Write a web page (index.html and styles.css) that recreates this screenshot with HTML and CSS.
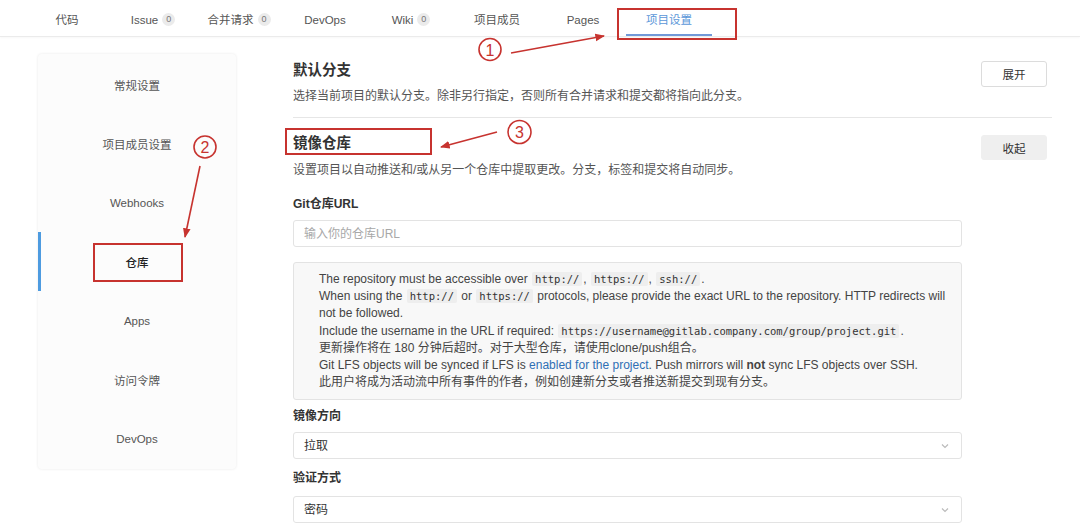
FILE: index.html
```html
<!DOCTYPE html>
<html lang="zh-CN">
<head>
  <meta charset="UTF-8">
  <meta name="viewport" content="width=device-width, initial-scale=1.0">
  <title>项目设置 - 仓库</title>
  <link rel="stylesheet" href="styles.css">
</head>
<body>
  <header class="tabs">
    <a class="tab" href="#">代码</a>
    <a class="tab" href="#">Issue <span class="badge">0</span></a>
    <a class="tab" href="#">合并请求 <span class="badge">0</span></a>
    <a class="tab" href="#">DevOps</a>
    <a class="tab" href="#">Wiki <span class="badge">0</span></a>
    <a class="tab" href="#">项目成员</a>
    <a class="tab" href="#">Pages</a>
    <a class="tab active" href="#">项目设置</a>
  </header>

  <div class="container">
    <aside class="side-menu">
      <a class="side-item" href="#">常规设置</a>
      <a class="side-item" href="#">项目成员设置</a>
      <a class="side-item" href="#">Webhooks</a>
      <a class="side-item active" href="#">仓库</a>
      <a class="side-item" href="#">Apps</a>
      <a class="side-item" href="#">访问令牌</a>
      <a class="side-item" href="#">DevOps</a>
    </aside>

    <main class="settings">
      <section class="section first">
        <div class="section-head">
          <div>
            <div class="section-title">默认分支</div>
            <div class="section-desc">选择当前项目的默认分支。除非另行指定，否则所有合并请求和提交都将指向此分支。</div>
          </div>
          <button class="btn">展开</button>
        </div>
      </section>

      <section class="section">
        <div class="section-head">
          <div>
            <div class="section-title">镜像仓库</div>
            <div class="section-desc">设置项目以自动推送和/或从另一个仓库中提取更改。分支，标签和提交将自动同步。</div>
          </div>
          <button class="btn btn-gray">收起</button>
        </div>

        <div class="form">
          <label class="form-label">Git仓库URL</label>
          <input class="form-input" type="text" placeholder="输入你的仓库URL">

          <div class="help-box">
            <div>The repository must be accessible over <code>http://</code>, <code>https://</code>, <code>ssh://</code>.</div>
            <div>When using the <code>http://</code> or <code>https://</code> protocols, please provide the exact URL to the repository. HTTP redirects will not be followed.</div>
            <div>Include the username in the URL if required: <code>https://username@gitlab.company.com/group/project.git</code>.</div>
            <div>更新操作将在 180 分钟后超时。对于大型仓库，请使用clone/push组合。</div>
            <div>Git LFS objects will be synced if LFS is <a href="#">enabled for the project</a>. Push mirrors will <strong>not</strong> sync LFS objects over SSH.</div>
            <div>此用户将成为活动流中所有事件的作者，例如创建新分支或者推送新提交到现有分支。</div>
          </div>

          <label class="form-label label-dir">镜像方向</label>
          <select class="form-select">
            <option>拉取</option>
            <option>推送</option>
          </select>

          <label class="form-label label-auth">验证方式</label>
          <select class="form-select select-auth">
            <option>密码</option>
            <option>SSH 公钥</option>
          </select>
        </div>
      </section>
    </main>
  </div>

  <!-- annotations drawn on top of the screenshot -->
  <svg class="marks" width="1080" height="525" viewBox="0 0 1080 525" xmlns="http://www.w3.org/2000/svg">
    <defs>
      <marker id="head" viewBox="0 0 10 10" refX="9" refY="5" markerWidth="6" markerHeight="6" orient="auto">
        <path d="M0,1 L10,5 L0,9 Z" fill="#c7332f"/>
      </marker>
    </defs>
    <g fill="none" stroke="#c7332f" stroke-width="2">
      <rect x="618" y="9" width="118" height="30"/>
      <rect x="94" y="244" width="88" height="37"/>
      <rect x="286" y="129" width="145" height="25"/>
    </g>
    <g fill="none" stroke="#c7332f" stroke-width="1.6">
      <circle cx="490" cy="49.5" r="11"/>
      <circle cx="205" cy="147" r="11"/>
      <circle cx="519.5" cy="132" r="11.5"/>
      <line x1="511" y1="53" x2="604" y2="36" marker-end="url(#head)"/>
      <line x1="200" y1="166" x2="185" y2="237" marker-end="url(#head)"/>
      <line x1="497" y1="132" x2="441" y2="147" marker-end="url(#head)"/>
    </g>
    <g class="mark-num" fill="#c7332f" text-anchor="middle">
      <text x="490" y="55.5">1</text>
      <text x="205" y="153">2</text>
      <text x="519.5" y="138">3</text>
    </g>
  </svg>
</body>
</html>
```

FILE: styles.css
```css
:root {
  --blue: #5b97d9;
  --text: #333333;
  --muted: #555555;
  --border: #e3e3e3;
}

body {
  margin: 0;
  position: relative;
  background: #ffffff;
  color: var(--text);
  font-family: "Liberation Sans", "Noto Sans CJK SC", sans-serif;
  font-size: 12px;
}

/* top tabs */
.tabs {
  display: flex;
  padding-left: 24px;
  height: 36px;
  border-bottom: 1px solid #ebebeb;
  box-shadow: 0 1px 2px rgba(0, 0, 0, 0.03);
}

.tab {
  box-sizing: border-box;
  width: 86px;
  height: 36px;
  padding-top: 6px;
  line-height: 28px;
  border-bottom: 2px solid transparent;
  display: flex;
  justify-content: center;
  align-items: flex-start;
  gap: 4px;
  color: var(--muted);
  font-size: 11.5px;
  text-decoration: none;
}

.tab.active {
  color: var(--blue);
  border-bottom-color: #7199d8;
}

.badge {
  display: inline-block;
  width: 13px;
  height: 13px;
  margin-top: 7px;
  border-radius: 50%;
  background: #ebebeb;
  color: #777;
  font-size: 9px;
  line-height: 13px;
  text-align: center;
}

/* page body */
.container {
  display: flex;
  gap: 57px;
  padding: 17px 28px 0 38px;
}

.side-menu {
  flex: 0 0 198px;
  align-self: flex-start;
  box-sizing: border-box;
  padding: 1px 0;
  background: #fcfcfc;
  border-radius: 4px;
  box-shadow: 0 0 3px rgba(0, 0, 0, 0.09);
}

.side-item {
  display: flex;
  height: 59px;
  align-items: center;
  justify-content: center;
  color: var(--muted);
  font-size: 11.5px;
  text-decoration: none;
  border-left: 3px solid transparent;
  margin-right: 3px;
}

.side-item.active {
  border-left-color: #4d9be0;
  color: #222;
  font-weight: 500;
}

.settings {
  flex: 1;
  min-width: 0;
}

.section {
  padding-top: 16px;
}

.section.first {
  padding-top: 7px;
  padding-bottom: 12px;
  border-bottom: 1px solid #e6e6e6;
}

.section-head {
  display: flex;
  justify-content: space-between;
  align-items: flex-start;
  padding-right: 5px;
}

.section-title {
  font-size: 14.5px;
  font-weight: bold;
  line-height: 18px;
}

.section-desc {
  margin-top: 8px;
  color: var(--muted);
  line-height: 18px;
}

.section:not(.first) .section-desc {
  margin-top: 9px;
}

.btn {
  width: 66px;
  height: 26px;
  border: 1px solid #dcdcdc;
  border-radius: 3px;
  background: #fff;
  color: var(--text);
  font-family: inherit;
  font-size: 11.5px;
  cursor: pointer;
}

.btn-gray {
  margin-top: 1px;
  height: 25px;
  border-color: #efefef;
  background: #efefef;
}

/* mirror form */
.form {
  width: 669px;
  display: flex;
  flex-direction: column;
}

.form-label {
  margin-top: 16px;
  line-height: 18px;
  font-weight: 600;
  color: var(--text);
}

.form-input,
.form-select {
  box-sizing: border-box;
  width: 100%;
  margin-top: 7px;
  padding: 0 10px;
  border: 1px solid var(--border);
  border-radius: 3px;
  background: #fff;
  color: var(--text);
  font-family: inherit;
  font-size: 12px;
}

.form-input {
  height: 27px;
}

.form-input::placeholder {
  color: #a8a8a8;
}

.form-select {
  height: 27px;
  appearance: none;
  background-image: url("data:image/svg+xml,%3Csvg xmlns='http://www.w3.org/2000/svg' width='8' height='6' viewBox='0 0 8 6'%3E%3Cpath d='M1 1.5 4 4.5 7 1.5' fill='none' stroke='%23bbbbbb' stroke-width='1.2'/%3E%3C/svg%3E");
  background-repeat: no-repeat;
  background-position: calc(100% - 12px) center;
}

.help-box {
  margin-top: 15px;
  padding: 8px 6px 8px 25px;
  border: 1px solid var(--border);
  border-radius: 3px;
  background: #f8f8f8;
  color: #444;
  line-height: 17.2px;
}

.help-box code {
  margin: 0 1px;
  padding: 1px 3px;
  border-radius: 2px;
  background: #eeeeee;
  color: #333;
  font-family: "DejaVu Sans Mono", "Liberation Mono", monospace;
  font-size: 10.5px;
  line-height: 1;
}

.help-box a {
  color: #2f6fb4;
  text-decoration: none;
}

.label-dir {
  margin-top: 7px;
}

.label-auth {
  margin-top: 10px;
}

.select-auth {
  margin-top: 9px;
}

/* annotation layer */
.marks {
  position: absolute;
  top: 0;
  left: 0;
  pointer-events: none;
}

.mark-num {
  font-family: "Liberation Sans", sans-serif;
  font-size: 16px;
}
```
